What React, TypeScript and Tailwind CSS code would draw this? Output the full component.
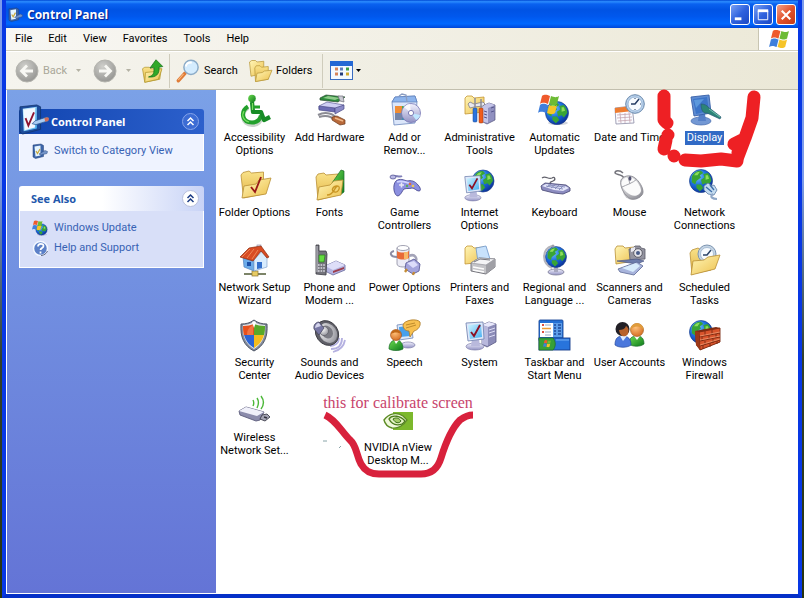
import { useState } from "react"
import type { ReactNode } from "react"


// Shared gradients, used by id from every icon

const Gradients = () => (
	<svg className="absolute h-0 w-0" aria-hidden="true">
		<defs>
			<linearGradient id="folder" x1="0" y1="0" x2="1" y2="1">
				<stop offset="0" stopColor="#fff6b8" />
				<stop offset="1" stopColor="#edc04c" />
			</linearGradient>
			<linearGradient id="folderBack" x1="0" y1="0" x2="0" y2="1">
				<stop offset="0" stopColor="#f9e28a" />
				<stop offset="1" stopColor="#e3b545" />
			</linearGradient>
			<radialGradient id="sea" cx="0.35" cy="0.3" r="0.75">
				<stop offset="0" stopColor="#7cc8ff" />
				<stop offset="0.5" stopColor="#1c6fe0" />
				<stop offset="1" stopColor="#0a2f96" />
			</radialGradient>
			<linearGradient id="screen" x1="0" y1="0" x2="1" y2="1">
				<stop offset="0" stopColor="#d2f4ff" />
				<stop offset="1" stopColor="#46aef0" />
			</linearGradient>
			<linearGradient id="lilac" x1="0" y1="0" x2="0" y2="1">
				<stop offset="0" stopColor="#f4f4ff" />
				<stop offset="1" stopColor="#9292c4" />
			</linearGradient>
			<linearGradient id="green" x1="0" y1="0" x2="1" y2="1">
				<stop offset="0" stopColor="#6edc50" />
				<stop offset="1" stopColor="#0c7a1c" />
			</linearGradient>
			<radialGradient id="grey" cx="0.35" cy="0.3" r="0.8">
				<stop offset="0" stopColor="#ffffff" />
				<stop offset="1" stopColor="#8e8e96" />
			</radialGradient>
			<radialGradient id="nav" cx="0.4" cy="0.3" r="0.8">
				<stop offset="0" stopColor="#d0d0cc" />
				<stop offset="1" stopColor="#8f8f8c" />
			</radialGradient>
			<radialGradient id="skin" cx="0.4" cy="0.3" r="0.8">
				<stop offset="0" stopColor="#ffc27a" />
				<stop offset="1" stopColor="#d0641a" />
			</radialGradient>
		</defs>
	</svg>
)


// Pieces that several icons have in common

const Folder = () => (
	<g stroke="#b98f35" strokeWidth="0.8" strokeLinejoin="round">
		<path d="M2 6l2-2.500 6-1.500 2.500 2 12-1v22l-20 4z" fill="url(#folderBack)" />
		<path d="M5 17l12-2 3-4 12-2-5 16-24 4z" fill="url(#folder)" />
	</g>
)

const SmallFolder = () => (
	<path d="M1 4l2-2h5l2 2 10-1v15l-19 2z" fill="url(#folder)" stroke="#c49632" strokeWidth="0.8" />
)

const Globe = ({ cx, cy, r }: { cx: number; cy: number; r: number }) => (
	<g transform={`translate(${cx} ${cy}) scale(${r / 10})`}>
		<circle r="10" fill="url(#sea)" stroke="#1b3f8c" strokeWidth="0.6" />
		<path d="M-8-4c2-4 5-5 8-5l2 2-3 2 1 2-4 3-1 3-3-2zM2-6l4-1c2 2 3 5 3 7l-3 4-2-2-3 1-1-4 3-2zM-4 3l4 0 2 3-3 3-3-3z" fill="#39a435" />
		<path d="M-6-5c1-2 3-3 5-3l-2 3zM4-5l2 0 1 3-3 1z" fill="#8ede5c" />
	</g>
)

const Flag = () => (
	<g>
		<path d="M4 1c3-2 5-1 8 0l-2 8c-3-1-5-2-8 0z" fill="#ef5a2c" />
		<path d="M13 1c3 1 5 2 8 0l-2 8c-3 2-5 1-8 0z" fill="#6dbb35" />
		<path d="M2 10c3-2 5-1 8 0l-2 8c-3-1-5-2-8 0z" fill="#3f7fdc" />
		<path d="M11 10c3 1 5 2 8 0l-2 8c-3 2-5 1-8 0z" fill="#f6c428" />
	</g>
)

const CheckedMonitor = () => (
	<g>
		<ellipse cx="11" cy="27.500" rx="9" ry="3.500" fill="url(#lilac)" stroke="#7d7da8" strokeWidth="0.7" />
		<path d="M8 20h7l1 7H7z" fill="#b9b9dc" />
		<path d="M2 4l17-1 1 17-16 2z" fill="#dfe8fa" stroke="#7889b4" strokeWidth="0.9" />
		<path d="M4 6l13-1 1 13-12 2z" fill="url(#screen)" />
		<path d="M7 13l3 4 6-11" fill="none" stroke="#8c1024" strokeWidth="1.900" />
	</g>
)


// Desktop icons, all on a 32 x 32 canvas

const AccessibilityIcon = () => (
	<>
		<path d="M9 14c-8 5-6 17 4 17 6 0 9-4 10-8" fill="none" stroke="#7b8f7b" strokeWidth="4" opacity="0.4" />
		<circle cx="13" cy="4.500" r="3.800" fill="url(#green)" />
		<g fill="none" stroke="#23a02c" strokeWidth="4.200" strokeLinejoin="round">
			<path d="M9 12.500c-8 5-6 16 4 16 5 0 8-3 9-7" />
			<path d="M13 8l1 10h8l3 8 6-3" stroke="#178c26" />
			<path d="M14 13h7" strokeWidth="3" />
		</g>
		<path d="M5 17c-3 5 0 10 5 11M13.500 9v7" fill="none" stroke="#7ae060" strokeWidth="1.200" />
	</>
)

const HardwareIcon = () => (
	<g strokeWidth="0.700">
		<path d="M6 4l6-3 19 2-7 5-18-2z" fill="#2b8a3a" stroke="#2c4a34" />
		<path d="M9 4l5-2 12 2-5 2z" fill="#8ecb8a" stroke="none" />
		<path d="M24 2h5l1 6-4-1z" fill="#c9c9d2" stroke="#6d6d78" />
		<path d="M5 12l8-4 17 3-9 6-16-2z" fill="#cfcff4" stroke="#5d5d96" />
		<path d="M5 12l16 2v4L5 16z" fill="#6c6cb4" stroke="#4b4b86" />
		<path d="M21 14l9-3v4l-9 5z" fill="#8b8bc8" stroke="#4b4b86" />
		<path d="M4 21c8-4 16-1 18 3M5 23c6-2 12-1 16 3" fill="none" stroke="#8c8c94" strokeWidth="2" />
		<path d="M18 23l5-1 8 4v4l-5 1-8-5z" fill="#b8693a" stroke="#6c3a1c" />
		<path d="M21 24l8 3" stroke="#f0b888" strokeWidth="1.500" />
	</g>
)

const ProgramsIcon = () => (
	<>
		<path d="M3 8l3-5 20-1 2 6-2 21-21 2z" fill="#dbe6fa" stroke="#6c88bc" strokeWidth="0.800" />
		<path d="M3 8l3-5 20-1 2 6z" fill="#8db4ec" stroke="#5b7cb8" strokeWidth="0.700" />
		<path d="M10 2l3-2 4 1 1 7" fill="none" stroke="#8a9cc0" strokeWidth="1.300" />
		<rect x="6" y="12" width="14" height="14" fill="#45b14c" />
		<path d="M6 12h7v14H6z" fill="#f08c34" />
		<path d="M6 19h14v7H6z" fill="#3f82dc" opacity="0.700" />
		<circle cx="22" cy="19" r="9.500" fill="url(#lilac)" stroke="#7676b4" strokeWidth="0.800" />
		<path d="M22 19l-7-6c2-2 4-3 6-3z" fill="#ffffff" opacity="0.800" />
		<path d="M22 19l5 7c2-1 4-3 4-5z" fill="#bfe6ff" />
		<circle cx="22" cy="19" r="2.600" fill="#ffffff" stroke="#7b7bb4" />
	</>
)

const AdminIcon = () => (
	<>
		<SmallFolder />
		<path d="M18 12l7-3 6 2v15l-8 4-6-3z" fill="#9090c0" stroke="#55557c" strokeWidth="0.700" />
		<path d="M18 12l6 2v15l-7-2zM18 12l7-3 6 2-7 3z" fill="#c4c4e8" />
		<path d="M20 17l3 1M20 20l3 1M20 23l3 1M27 14l3-1M27 18l3-1" stroke="#55558c" />
		<path d="M4 10l2-2 4 2 9-2 2 2-2 2-9 1-4 1z" fill="#e8e8ee" stroke="#70707c" strokeWidth="0.700" />
		<rect x="9" y="14" width="4" height="14" rx="1" fill="#2c74dc" stroke="#1b4690" strokeWidth="0.500" />
		<rect x="15" y="14" width="4" height="15" rx="1" fill="#f05c1c" stroke="#96300c" strokeWidth="0.500" />
		<path d="M11 4v10M17 5v9" stroke="#8c8c98" strokeWidth="1.500" />
	</>
)

const UpdatesIcon = () => (
	<>
		<ellipse cx="20" cy="29" rx="10" ry="2" fill="#8c94a8" opacity="0.400" />
		<Globe cx={19} cy={19} r={11.500} />
		<g transform="translate(0 1)"><Flag /></g>
	</>
)

const DateIcon = () => (
	<>
		<path d="M2 14l17-2 2 17-18 1z" fill="#fbfbff" stroke="#8c8ca4" strokeWidth="0.800" />
		<path d="M2 14l17-2 1 5-18 2z" fill="#ee7c30" />
		<path d="M4 21l14-1M4 24l15-1M5 27l14-1M7 19l1 10M12 19v10M16 18l1 11" stroke="#c4a4b0" strokeWidth="0.800" />
		<circle cx="22" cy="10" r="9.300" fill="#b8d0ea" stroke="#6888ac" strokeWidth="1" />
		<circle cx="22" cy="10" r="7" fill="#f6fbff" stroke="#8cacd0" strokeWidth="0.800" />
		<path d="M26 5l-4 5h-4" fill="none" stroke="#243c64" strokeWidth="1.500" />
		<path d="M22 4v1M22 15v1M28 10h-1" stroke="#243c64" />
	</>
)

const DisplayIcon = () => (
	<>
		<ellipse cx="12" cy="27" rx="10" ry="4" fill="#7398d4" stroke="#4468ac" strokeWidth="0.700" />
		<path d="M10 20h6l1 7H9z" fill="#5580c8" />
		<path d="M2 3l18-2 2 18-17 3z" fill="#5e8cd2" stroke="#3860a8" strokeWidth="0.900" />
		<path d="M4 5l14-2 2 14-13 3z" fill="#3c74c8" />
		<path d="M5 6l10-1-8 9z" fill="#5c98dc" />
		<path d="M12 10c3 0 6 1 8 4l3 2 9 7-1 2-13-6c-3 1-6-2-6-9z" fill="#2c8478" stroke="#285c74" strokeWidth="0.700" />
		<path d="M20 15l11 8" stroke="#74c4ac" />
	</>
)

const FolderOptionsIcon = () => (
	<>
		<Folder />
		<path d="M12 18l4 5 6-15" fill="none" stroke="#981818" strokeWidth="1.900" />
	</>
)

const FontsIcon = () => (
	<>
		<path d="M2 8l2-3 6-1 2 2 12-1v21l-20 5z" fill="url(#folderBack)" stroke="#b98f35" strokeWidth="0.800" />
		<path d="M18 14l9-13 3 1v21l-4 3z" fill="url(#green)" stroke="#1c6a28" strokeWidth="0.700" />
		<path d="M5 18l11-2 4-4 9-1-2 15-24 5z" fill="url(#folder)" stroke="#b98f35" strokeWidth="0.800" />
		<path d="M13 26c8 0 7-9 11-9 3 1 0 7-3 6-5-1-2-6 2-6" fill="none" stroke="#c99524" strokeWidth="1.300" />
	</>
)

const GameIcon = () => (
	<>
		<path d="M3 8c3-3 7 1 10-1" stroke="#8080b8" strokeWidth="2" fill="none" />
		<ellipse cx="4" cy="8" rx="3" ry="2" fill="#b8b8e4" stroke="#5a5a98" strokeWidth="0.800" />
		<path d="M7 12c4-3 8-1 11 0 4-1 8 0 11 4 3 3 3 6 1 6-3 0-4-3-7-3-3 1-5 0-8 1-2 2-3 6-6 7-4 0-6-11-2-15z" fill="#8c90e0" stroke="#4c4c94" strokeWidth="0.900" />
		<path d="M8 13c4-2 8 0 12 1" stroke="#d0d4ff" strokeWidth="1.800" fill="none" />
		<path d="M10 16h5M12.500 13.500v5" stroke="#e8e8f4" strokeWidth="1.600" />
		<circle cx="21" cy="15" r="1.300" fill="#e46a3c" />
		<circle cx="24" cy="17" r="1.300" fill="#f0cc50" />
		<circle cx="18" cy="17" r="1.200" fill="#5cac58" />
	</>
)

const InternetIcon = () => (
	<>
		<Globe cx={20} cy={12} r={11} />
		<g transform="translate(0 4) scale(0.9)"><CheckedMonitor /></g>
	</>
)

const KeyboardIcon = () => (
	<>
		<path d="M3 9c4-3 6 2 10 0 3-2 4 2 1 3-2 1-4 1-2 3" fill="none" stroke="#62626c" strokeWidth="1.300" />
		<path d="M2 17l4-3 21 2 4 3v3l-7 3-9-1-12-3z" fill="#8c8cc0" stroke="#50507c" strokeWidth="0.900" />
		<path d="M3 17l4-2 19 2 4 2-6 3-9-1z" fill="#e4e6fa" />
		<path d="M7 17l17 3M9 16l17 2M12 15l-4 3M16 16l-4 3M20 16l-4 4M24 17l-4 4" stroke="#8088b8" strokeWidth="0.900" />
	</>
)

const MouseIcon = () => (
	<>
		<path d="M11 9C9 5 3 6 2 4c0-3 5-3 8 0" fill="none" stroke="#74747c" strokeWidth="1.500" />
		<ellipse cx="20" cy="22" rx="10" ry="9" fill="#888890" opacity="0.500" />
		<path d="M8 11c2-4 9-6 14-2 4 3 8 9 8 14 0 4-6 8-12 7C12 28 6 17 8 11z" fill="url(#grey)" stroke="#8c8c94" strokeWidth="0.900" />
		<path d="M9 12c2-4 8-5 12-2 4 3 7 8 7 12-1 4-6 6-10 4-6-3-11-9-9-14z" fill="#fbfbfb" />
		<path d="M9 18c4-2 11-4 15-8M15 8l2 7" stroke="#9c9ca4" fill="none" strokeWidth="0.900" />
		<ellipse cx="17" cy="9.500" rx="1.400" ry="2.300" fill="#505070" />
	</>
)

const NetworkIcon = () => (
	<>
		<Globe cx={13} cy={12} r={11.500} />
		<path d="M16 17l4-3 4 3 2-1 3 5-3 5-6-1-4-4z" fill="#c4dcf0" stroke="#5c7ca4" strokeWidth="0.800" />
		<path d="M18 18l6 5M22 16l4 5" stroke="#3c6ca8" strokeWidth="1.300" />
		<path d="M25 25c-4 3 0 5 4 5" fill="none" stroke="#90a8c8" strokeWidth="2.200" />
	</>
)

const HomeIcon = () => (
	<>
		<path d="M5 30h22M16 24v6" stroke="#7c8468" strokeWidth="2" />
		<rect x="13" y="27" width="6" height="5" fill="#e8cc64" stroke="#8c7430" strokeWidth="0.700" />
		<path d="M4 12l11 4v11L5 23z" fill="#6cacea" stroke="#5484bc" strokeWidth="0.700" />
		<path d="M15 16l9-10 4 8v9l-13 4z" fill="#d8ecfe" stroke="#84a4cc" strokeWidth="0.700" />
		<rect x="18" y="1" width="4" height="6" fill="#e8e8f0" stroke="#8484a0" strokeWidth="0.600" />
		<path d="M1 13L10 4l12-2 8 11-2 1-6-7-8 10z" fill="#d84c24" stroke="#8c2c10" strokeWidth="0.700" />
		<path d="M3 13l8-8M8 14l7-9M13 15l6-9" stroke="#f08c5c" strokeWidth="0.900" />
		<path d="M18 18h5v6l-5 1z" fill="#3470cc" />
		<path d="M8 18h4v4H8z" fill="#1c50a8" />
	</>
)

const PhoneIcon = () => (
	<>
		<path d="M12 22l11-5 9 4v5l-12 5-8-4z" fill="#b4b4e0" stroke="#68689c" strokeWidth="0.800" />
		<path d="M12 22l11-5 9 4-12 5z" fill="#dedef8" />
		<path d="M20 27l11-4v2l-11 4z" fill="#9c3c4c" />
		<path d="M3 1h3v6h7l1 3-1 21-10-1z" fill="#74747c" stroke="#3a3a42" strokeWidth="0.800" />
		<path d="M6 11h6l-1 7H6z" fill="#64dc40" stroke="#287c1c" strokeWidth="0.700" />
		<path d="M5 21h7M5 24h7M5 27h7" stroke="#dcdce4" strokeWidth="1.400" strokeDasharray="1.600 1" />
		<path d="M4 2v26" stroke="#c4c4cc" />
	</>
)

const PowerIcon = () => (
	<>
		<path d="M8 13C1 13 0 8 5 7" fill="none" stroke="#8c8ca4" strokeWidth="2" />
		<path d="M8 4v16c0 4 12 4 12 0V4z" fill="#ececf6" stroke="#8c8ca0" strokeWidth="0.800" />
		<path d="M8 7v7c3 2 9 2 12 0V7c-3 2-9 2-12 0z" fill="#e86a38" />
		<path d="M15 8h4v7h-4z" fill="#f8b868" />
		<ellipse cx="14" cy="4" rx="6" ry="2.500" fill="#ffffff" stroke="#8c8ca0" strokeWidth="0.800" />
		<path d="M20 12c6-3 9 3 6 6" fill="none" stroke="#a4a4b8" strokeWidth="2.500" />
		<path d="M17 19l8-4 6 5-1 7-6 3-8-5z" fill="#a4a4dc" stroke="#5c5c98" strokeWidth="0.900" />
		<path d="M18 19l7-2 4 4-5 3z" fill="#dcdcfa" />
		<path d="M18 25l-2 3M25 28l-1 3" stroke="#c48c34" strokeWidth="2.300" />
	</>
)

const PrinterIcon = () => (
	<>
		<SmallFolder />
		<path d="M12 4l10-2 4 13-12 3z" fill="#c8e2fc" stroke="#6c94c8" strokeWidth="0.800" />
		<path d="M7 19l8-5 16 1v8l-9 7-15-3z" fill="#c4c4c8" stroke="#6c6c74" strokeWidth="0.900" />
		<path d="M7 19l8-5 16 1-9 6z" fill="#f4f4f6" stroke="#8c8c94" strokeWidth="0.600" />
		<path d="M10 18l6-3 10 1" fill="none" stroke="#74747c" />
		<path d="M9 23l11 2M9 26l11 2" stroke="#fdfdfd" strokeWidth="1.500" />
		<path d="M22 21l9-6v8l-9 7z" fill="#a0a0a6" />
	</>
)

const RegionalIcon = () => (
	<>
		<ellipse cx="17" cy="28" rx="8" ry="3" fill="url(#lilac)" stroke="#7c7c98" strokeWidth="0.800" />
		<path d="M15 23h4v5h-4z" fill="#a8a8c0" />
		<path d="M13 2C3 5 2 19 13 24" fill="none" stroke="#b4b4bc" strokeWidth="2" />
		<Globe cx={17} cy={13} r={10.500} />
		<circle cx="14" cy="2" r="1.500" fill="#9c9ca8" />
	</>
)

const ScannerIcon = () => (
	<>
		<path d="M1 5l2-3h6l2 2 9-1v14l-18 3z" fill="url(#folder)" stroke="#b98f35" strokeWidth="0.800" />
		<path d="M15 5l4-1 2-2h5l1 2 4 1v10l-15 1z" fill="#9494a0" stroke="#5c5c68" strokeWidth="0.800" />
		<path d="M17 4l4-1v4l-4 1z" fill="#e8e8f0" />
		<circle cx="24" cy="9" r="4.300" fill="#e4e4ea" stroke="#54545c" strokeWidth="0.900" />
		<circle cx="24" cy="9" r="2" fill="#485c88" />
		<path d="M3 17l20-2 7 2-7 3z" fill="#6c7cac" stroke="#4c5884" strokeWidth="0.700" />
		<path d="M4 25l19-7 6 4-9 9-14-3z" fill="#a8b4dc" stroke="#5c6894" strokeWidth="0.800" />
		<path d="M8 24l14-5 4 3-7 6z" fill="#d8ecfc" />
	</>
)

const TasksIcon = () => (
	<>
		<path d="M2 9l2-3 6-2 3 2 10-2v22l-19 4z" fill="url(#folderBack)" stroke="#b98f35" strokeWidth="0.800" />
		<circle cx="19" cy="10" r="9" fill="#c4d4e4" stroke="#7c94b0" />
		<circle cx="19" cy="10" r="6.500" fill="#f8fcff" stroke="#94acc8" strokeWidth="0.700" />
		<path d="M23 6l-4 5h-4" fill="none" stroke="#2c4468" strokeWidth="1.500" />
		<path d="M5 17l11-1 4-3 12-2-5 14-24 6z" fill="url(#folder)" stroke="#b98f35" strokeWidth="0.800" />
	</>
)

const SecurityIcon = () => (
	<>
		<path d="M15 1c4 3 8 4 13 4 1 13-3 22-13 27C5 27 1 18 2 5c5 0 9-1 13-4z" fill="#848c9c" stroke="#444c5c" strokeWidth="0.900" />
		<path d="M15 3c4 2 7 3 11 3 1 11-3 19-11 24C7 25 3 17 4 6c4 0 7-1 11-3z" fill="#e8ecf0" />
		<path d="M15 5v11H5c-1-3-1-6-1-9 4 0 8-1 11-2z" fill="#e8501c" />
		<path d="M15 5c3 1 7 2 11 2 0 3 0 6-1 9H15z" fill="#58a828" />
		<path d="M5 16h10v13c-5-3-8-7-10-13z" fill="#2c64d4" />
		<path d="M15 16h10c-2 6-5 10-10 13z" fill="#f4bc1c" />
		<path d="M14 6v10H8c0-5 2-8 6-10z" fill="#f88c5c" opacity="0.600" />
		<path d="M13 3l2 6 2-6-2-1z" fill="#ffffff" />
	</>
)

const SoundIcon = () => (
	<>
		<path d="M18 30c7 0 11-4 11-11M17 27c5 0 9-3 9-8M20 33c8-2 11-6 12-12" fill="none" stroke="#b4b0e0" strokeWidth="1.800" />
		<ellipse cx="14" cy="14" rx="11" ry="13" transform="rotate(-35 14 14)" fill="#606068" stroke="#3c3c44" strokeWidth="0.900" />
		<ellipse cx="15" cy="14" rx="8.500" ry="10.500" transform="rotate(-35 15 14)" fill="url(#grey)" />
		<ellipse cx="14" cy="13" rx="5.500" ry="7" transform="rotate(-35 14 13)" fill="#7c7c84" />
		<circle cx="11" cy="12" r="4.500" fill="url(#grey)" stroke="#54545c" strokeWidth="0.600" />
		<path d="M1 10c-1-4 2-7 5-7l5 6-5 7z" fill="#7878a4" stroke="#44445c" strokeWidth="0.700" />
		<path d="M2 9c0-3 2-5 4-5l2 3z" fill="#d4d4ec" />
	</>
)

const SpeechIcon = () => (
	<>
		<ellipse cx="20" cy="26" rx="7" ry="3" fill="url(#lilac)" stroke="#7c7ca8" strokeWidth="0.700" />
		<path d="M9 6l14-2 2 15-14 2z" fill="#dce8fa" stroke="#7088b8" strokeWidth="0.800" />
		<path d="M11 8l10-1 1 10-10 1z" fill="#46a0ec" />
		<path d="M15 6c1-5 14-7 17-3 1 4-2 8-6 9l-4 6-1-6c-4 0-6-3-6-6z" fill="#f8c050" stroke="#a87828" strokeWidth="0.800" />
		<path d="M18 6l9-2M18 9l10-3" stroke="#b88428" strokeWidth="0.900" />
		<path d="M1 30c0-6 3-9 7-9s7 3 7 9c-4 2-10 2-14 0z" fill="url(#green)" stroke="#186a28" strokeWidth="0.700" />
		<path d="M6 21l2 4 3-4z" fill="#ffffff" />
		<circle cx="8" cy="16" r="5.500" fill="url(#skin)" stroke="#984c14" strokeWidth="0.600" />
		<path d="M3 15c0-5 9-6 10 0-3-2-7-2-10 0z" fill="#c06818" />
	</>
)

const SystemIcon = () => (
	<>
		<path d="M18 6l7-3 7 2v18l-9 5-5-3z" fill="#8c8cb8" stroke="#585884" strokeWidth="0.800" />
		<path d="M18 6l7-3 7 2-8 3z" fill="#e8e8fa" />
		<path d="M18 6l6 2v19l-6-2z" fill="#b8b8dc" />
		<path d="M25 11l6-2M25 14l6-2M25 18l6-2" stroke="#dcdcf4" />
		<CheckedMonitor />
	</>
)

const TaskbarIcon = () => (
	<>
		<rect x="1" y="1" width="24" height="21" rx="1" fill="#2470d4" stroke="#1c4898" strokeWidth="0.900" />
		<rect x="2" y="4" width="13" height="14" fill="#ffffff" />
		<rect x="15" y="4" width="9" height="14" fill="#5c9ce8" />
		<path d="M4 6h2M4 13h2" stroke="#e05040" strokeWidth="1.800" />
		<path d="M7 6h6M7 13h6M7 16h6" stroke="#9cacc4" />
		<path d="M4 9.500h9" stroke="#f09c34" strokeWidth="1.500" />
		<path d="M16 6h2M16 9h2M16 12h2M16 15h2M20 6h3M20 9h3M20 12h3M20 15h3" stroke="#1c4898" strokeWidth="1.600" />
		<rect x="1" y="19" width="31" height="12" fill="#2874dc" stroke="#143c8c" strokeWidth="0.900" />
		<path d="M1 19h14c3 3 3 9 0 12H1z" fill="#36a038" stroke="#1c6c24" strokeWidth="0.700" />
		<g transform="translate(5 21) scale(0.38)"><Flag /></g>
		<path d="M18 21h13" stroke="#74b0f4" />
	</>
)

const UsersIcon = () => (
	<>
		<path d="M15 25c0-6 3-8 8-8 5 0 7 3 7 8-4 3-11 3-15 0z" fill="url(#green)" stroke="#186a28" strokeWidth="0.700" />
		<path d="M20 17l3 4 3-4z" fill="#ffffff" />
		<circle cx="23" cy="11" r="6.500" fill="url(#skin)" stroke="#985414" strokeWidth="0.600" />
		<path d="M16.500 11c0-9 13-9 13 0-3-4-9-5-13 0z" fill="#e09c3c" />
		<path d="M1 26c0-7 3-9 8-9s8 3 8 9c-4 3-12 3-16 0z" fill="#4c78dc" stroke="#24489c" strokeWidth="0.700" />
		<path d="M6 17l3 5 4-5z" fill="#e0ecff" />
		<circle cx="8.500" cy="10" r="7" fill="#222026" />
		<path d="M5 11c3 0 6-1 7-4 3 2 3 5 2 8-3 4-8 3-9-4z" fill="#b8622c" />
	</>
)

const FirewallIcon = () => (
	<>
		<Globe cx={12} cy={13} r={11.500} />
		<path d="M6 12l21-4 4 1v14l-20 8-4-5z" fill="#7c2c14" />
		<path d="M10 13l21-4v14l-20 8z" fill="#d8542c" stroke="#7c2810" strokeWidth="0.900" />
		<path d="M6 12l4 1 1 18-4-5z" fill="#9c3818" />
		<path d="M10 18l21-4M11 22l20-4M11 27l20-6M16 12v5M23 11v5M13 18v4M20 16v4M27 15v4M16 22v4M24 20v4M14 26v4M21 24v4M28 22v3" stroke="#7c2810" strokeWidth="0.900" />
		<path d="M11 17l20-4M11 21l20-4M11 26l20-6" stroke="#f8b48c" strokeWidth="0.600" />
	</>
)

const WirelessIcon = () => (
	<>
		<path d="M15 6c1 2 1 4 0 6M19 4c2 3 2 6 0 10M23 2c3 4 3 9 0 13" fill="none" stroke="#4cb838" strokeWidth="1.400" />
		<path d="M1 17l7-4 18 5-4 8-4 1L2 21z" fill="#8c8cac" stroke="#5c5c7c" strokeWidth="0.900" />
		<path d="M1 17l7-4 18 5-7 4z" fill="#f0f0fa" />
		<path d="M24 21l5-1 3 3-5 4-5-2z" fill="#a4a4b4" stroke="#40404c" strokeWidth="0.900" />
		<path d="M26 23l3 1" stroke="#30303c" strokeWidth="1.600" />
	</>
)

const PanelIcon = () => (
	<>
		<path d="M1 3l18-2 4 2v24l-19 5-3-2z" fill="#1c4c9c" stroke="#12346c" strokeWidth="0.800" />
		<path d="M4 5l15-2v23L5 29z" fill="url(#screen)" />
		<path d="M5 6l12-2v21L6 28z" fill="#f2f8ff" />
		<path d="M7 15l3 8 6-14" fill="none" stroke="#8c1430" strokeWidth="2" />
		<path d="M14 21l3-3 12-4 3 1-1 3-13 4z" fill="#a8ccf4" stroke="#2c5890" strokeWidth="0.800" />
		<path d="M27 15l4-1 1 2-1 2-3 1z" fill="#d06c5c" />
	</>
)

// Lighter version of the same panel, for the 16px sizes

const SmallPanelIcon = () => (
	<>
		<path d="M2 4l16-2 5 3v22l-16 4-5-3z" fill="#3c64a8" stroke="#1c3c74" />
		<path d="M5 7l12-2v20L7 27z" fill="#e4f4ff" />
		<path d="M8 16l3 5 5-9" fill="none" stroke="#c8a83c" strokeWidth="2.500" />
		<path d="M14 22l12-7 5 2-1 4-12 3z" fill="#7494c8" stroke="#2c4c84" />
	</>
)


const Svg = ({ children, className = "h-8 w-8" }: { children: ReactNode; className?: string }) => (
	<svg viewBox="0 0 32 32" className={`${className} shrink-0 overflow-visible`} aria-hidden="true">
		{children}
	</svg>
)

const items = [
	{ label: "Accessibility\nOptions", icon: AccessibilityIcon },
	{ label: "Add Hardware", icon: HardwareIcon },
	{ label: "Add or\nRemov...", icon: ProgramsIcon },
	{ label: "Administrative\nTools", icon: AdminIcon },
	{ label: "Automatic\nUpdates", icon: UpdatesIcon },
	{ label: "Date and Time", icon: DateIcon },
	{ label: "Display", icon: DisplayIcon },
	{ label: "Folder Options", icon: FolderOptionsIcon },
	{ label: "Fonts", icon: FontsIcon },
	{ label: "Game\nControllers", icon: GameIcon },
	{ label: "Internet\nOptions", icon: InternetIcon },
	{ label: "Keyboard", icon: KeyboardIcon },
	{ label: "Mouse", icon: MouseIcon },
	{ label: "Network\nConnections", icon: NetworkIcon },
	{ label: "Network Setup\nWizard", icon: HomeIcon },
	{ label: "Phone and\nModem ...", icon: PhoneIcon },
	{ label: "Power Options", icon: PowerIcon },
	{ label: "Printers and\nFaxes", icon: PrinterIcon },
	{ label: "Regional and\nLanguage ...", icon: RegionalIcon },
	{ label: "Scanners and\nCameras", icon: ScannerIcon },
	{ label: "Scheduled\nTasks", icon: TasksIcon },
	{ label: "Security\nCenter", icon: SecurityIcon },
	{ label: "Sounds and\nAudio Devices", icon: SoundIcon },
	{ label: "Speech", icon: SpeechIcon },
	{ label: "System", icon: SystemIcon },
	{ label: "Taskbar and\nStart Menu", icon: TaskbarIcon },
	{ label: "User Accounts", icon: UsersIcon },
	{ label: "Windows\nFirewall", icon: FirewallIcon },
	{ label: "Wireless\nNetwork Set...", icon: WirelessIcon },
]

const menu = ["File", "Edit", "View", "Favorites", "Tools", "Help"]


const TitleBar = () => (
	<header className="flex h-7 items-center justify-between bg-[linear-gradient(#0048d4_0%,#2b8cff_6%,#0a62f0_14%,#0053e4_35%,#0058ee_60%,#0068ff_85%,#0046d8_100%)] px-0.5 pt-px">
		<div className="flex items-center gap-1">
			<Svg className="h-[15px] w-[15px]"><SmallPanelIcon /></Svg>
			<h1 className="font-['Open_Sans','Noto_Sans',sans-serif] text-[12px] font-bold text-white [text-shadow:1px_1px_1px_#0a1883]">Control Panel</h1>
		</div>
		<div className="flex gap-[3px]">
			<button aria-label="Minimize" className="h-[21px] w-5 rounded-[3px] border border-white bg-linear-to-br from-[#7ba0f4] via-[#2f62de] to-[#1c48c4]">
				<svg viewBox="0 0 19 19"><path d="M4 13.500h7" stroke="#fff" strokeWidth="3" /></svg>
			</button>
			<button aria-label="Maximize" className="h-[21px] w-5 rounded-[3px] border border-white bg-linear-to-br from-[#7ba0f4] via-[#2f62de] to-[#1c48c4]">
				<svg viewBox="0 0 19 19" fill="none" stroke="#fff"><path d="M4.500 5v9.500h10V5" /><path d="M4 5h11" strokeWidth="3" /></svg>
			</button>
			<button aria-label="Close" className="h-[21px] w-5 rounded-[3px] border border-white bg-linear-to-br from-[#f0a088] via-[#e2532c] to-[#c43a14]">
				<svg viewBox="0 0 19 19"><path d="M5 5l9 9M14 5l-9 9" stroke="#fff" strokeWidth="2.200" /></svg>
			</button>
		</div>
	</header>
)

const MenuBar = () => (
	<div className="flex h-[23px] items-stretch justify-between border-b border-[#d0cebf] bg-linear-to-r from-[#f8f7f3] to-[#ece9d8]">
		<nav className="flex items-center gap-4 pl-[9px]">
			{menu.map((item) => (
				<button key={item}>{item}</button>
			))}
		</nav>
		<div className="flex w-10 items-center justify-center border-l border-[#c8c5b2] bg-white">
			<svg viewBox="0 0 21 19" className="h-[18px] w-5" aria-hidden="true"><Flag /></svg>
		</div>
	</div>
)

const Caret = ({ color }: { color: string }) => (
	<svg viewBox="0 0 5 3" className="h-[3px] w-[5px] shrink-0"><path d="M0 0h5L2.500 3z" fill={color} /></svg>
)

const NavArrow = ({ d }: { d: string }) => (
	<svg viewBox="0 0 24 24" className="h-6 w-6 shrink-0">
		<circle cx="12" cy="12" r="11" fill="url(#nav)" stroke="#b4b4ae" />
		<path d={d} fill="none" stroke="#f8f8f4" strokeWidth="2.800" />
	</svg>
)

const Toolbar = () => (
	<div className="flex h-[39px] items-center border-t border-b border-t-white border-b-[#c2bfae] bg-linear-to-r from-[#f5f4ee] to-[#ebe8d7] pl-[9px]">
		<button disabled className="flex w-[66px] items-center gap-1 text-[#a9a799]">
			<NavArrow d="M18 12H7M12 6.500L6.500 12l5.500 5.500" />
			<span className="grow text-left">Back</span>
			<Caret color="#b4b2a4" />
		</button>
		<button disabled aria-label="Forward" className="ml-3 flex w-[38px] items-center justify-between">
			<NavArrow d="M6 12h11M12 6.500l5.500 5.500-5.500 5.500" />
			<Caret color="#b4b2a4" />
		</button>
		<button aria-label="Up" className="ml-2.5">
			<Svg className="h-6 w-6">
				<path d="M2 13l3-2 6 0 2 2 14 0-2 14-20 4z" fill="url(#folderBack)" stroke="#b39a30" />
				<path d="M6 18l10-1 4-3 8-1-5 14-18 4z" fill="url(#folder)" stroke="#b39a30" />
				<path d="M10 24c7-2 8-6 7-13l-5 1L20 1l9 9-5 1c1 9-4 14-14 13z" fill="#30a828" stroke="#16701a" />
			</Svg>
		</button>
		<span className="ml-1 h-[34px] w-px bg-[#cfccbc]" />
		<button className="ml-1.5 flex w-[62px] items-center gap-1">
			<Svg className="h-6 w-6">
				<path d="M3 29l9-10" stroke="#e07c38" strokeWidth="4.500" strokeLinecap="round" />
				<path d="M3 28l7-8" stroke="#f8bc84" strokeWidth="1.500" />
				<circle cx="20" cy="11" r="9.500" fill="#d4ecfe" stroke="#8cacc8" strokeWidth="2" />
				<path d="M13 10c1-4 4-6 8-5" fill="none" stroke="#fff" strokeWidth="2.500" />
			</Svg>
			Search
		</button>
		<button className="ml-2.5 flex w-[64px] items-center gap-1">
			<Svg className="h-6 w-6">
				<path d="M2 4l3-2h5l2 2 9-1v16L4 23z" fill="url(#folder)" stroke="#b99a3c" />
				<path d="M9 12l2-3h5l2 2 9-1v17l-17 3z" fill="url(#folderBack)" stroke="#b99a3c" />
				<path d="M12 19l7-1 3-2 10-1-5 12-17 3z" fill="url(#folder)" stroke="#b99a3c" />
			</Svg>
			Folders
		</button>
		<span className="ml-2.5 h-[34px] w-px bg-[#cfccbc]" />
		<button aria-label="Views" className="ml-[7px] flex items-center gap-[3px]">
			<svg viewBox="0 0 23 19" className="h-[19px] w-[23px]">
				<rect x="0.500" y="0.500" width="22" height="18" fill="#f4f9ff" stroke="#3a6cc0" />
				<path d="M0 2.500h23" stroke="#2468d4" strokeWidth="5" />
				<path d="M5 8h3M5 13h3" stroke="#d88458" strokeWidth="3" />
				<path d="M10 8h3" stroke="#5c7cc0" strokeWidth="3" />
				<path d="M10 13h3" stroke="#243c7c" strokeWidth="3" />
				<path d="M16 8h3" stroke="#3c9c44" strokeWidth="3" />
				<path d="M16 13h3" stroke="#d0a82c" strokeWidth="3" />
			</svg>
			<Caret color="#000" />
		</button>
	</div>
)

const Chevrons = ({ dark }: { dark?: boolean }) => (
	<svg viewBox="0 0 19 19" className="h-[19px] w-[19px]">
		<circle cx="9.500" cy="9.500" r="8" fill={dark ? "#3c6cd4" : "#ffffff"} stroke={dark ? "#86a4ea" : "#b8c0dc"} />
		<path d="M6.500 9l3-3 3 3M6.500 13l3-3 3 3" fill="none" stroke={dark ? "#ffffff" : "#1c3c84"} strokeWidth="1.500" />
	</svg>
)

const Sidebar = () => {

	const [tasksOpen, setTasksOpen] = useState(true);
	const [seeAlsoOpen, setSeeAlsoOpen] = useState(true);

	return (
		<aside className="w-[210px] shrink-0 border-l border-white bg-linear-to-b from-[#7ba1e7] to-[#6474d6] px-3 pt-[19px] text-[#3762b4]">
			<section>
				<div className="flex h-[25px] items-center justify-between rounded-t-[3px] bg-linear-to-r from-[#1145b0] to-[#2c60cc] pr-1">
					<div className="flex items-end gap-0.5">
						<Svg className="-mt-1.5 h-[30px] w-[30px]"><PanelIcon /></Svg>
						<h2 className="pb-1 font-['Open_Sans','Noto_Sans',sans-serif] font-bold text-white">Control Panel</h2>
					</div>
					<button aria-label="Toggle Control Panel" onClick={() => setTasksOpen(!tasksOpen)}><Chevrons dark /></button>
				</div>
				{tasksOpen && (
					<div className="border border-t-0 border-white bg-[#eff3ff] px-3 pt-[9px] pb-[11px]">
						<a href="#category" className="flex items-center gap-1.5">
							<Svg className="h-4 w-4"><SmallPanelIcon /></Svg>
							Switch to Category View
						</a>
					</div>
				)}
			</section>
			<section className="mt-[15px]">
				<div className="flex h-[25px] items-center justify-between rounded-t-[3px] bg-linear-to-r from-white from-45% to-[#c8d3f6] pr-1 pl-3">
					<h2 className="font-['Open_Sans','Noto_Sans',sans-serif] font-bold text-[#2257ac]">See Also</h2>
					<button aria-label="Toggle See Also" onClick={() => setSeeAlsoOpen(!seeAlsoOpen)}><Chevrons /></button>
				</div>
				{seeAlsoOpen && (
					<div className="flex flex-col gap-1 border border-t-0 border-white bg-[#d8dff8] px-3 pt-[9px] pb-[11px]">
						<a href="#update" className="flex items-center gap-1.5">
							<Svg className="h-4 w-4"><UpdatesIcon /></Svg>
							Windows Update
						</a>
						<a href="#help" className="flex items-center gap-1.5">
							<Svg className="h-4 w-4">
								<circle cx="17" cy="17" r="14" fill="#5c80c8" stroke="#f4f8ff" strokeWidth="3" />
								<path d="M12 13c0-7 11-7 11-1 0 4-6 4-6 8M17 23v4" fill="none" stroke="#ffffff" strokeWidth="3.500" />
								<path d="M31 22c-2 5-7 9-13 9" fill="none" stroke="#5c6484" strokeWidth="2" />
							</Svg>
							Help and Support
						</a>
					</div>
				)}
			</section>
		</aside>
	)
}

// Hand-drawn note lying over the icon area

const Markup = () => (
	<>
		<svg viewBox="0 0 110 80" className="pointer-events-none absolute top-0 left-[440px] h-20 w-[110px] overflow-visible" fill="none" stroke="#ee2024" strokeWidth="13" strokeLinecap="round" strokeLinejoin="round">
			<path d="M8 6v24l3 3M12 45v0M8 59l2-9M18 66v0" />
			<path d="M29 70l16 1 20-2 16 2" />
			<path d="M98 7l-2 21-7 20-8 21M78 54l8-4-4 12" />
		</svg>
		<figure className="absolute top-[303px] left-[107px] flex w-[150px] flex-col items-center">
			<figcaption className="font-['Liberation_Serif',serif] text-[16px] leading-5 whitespace-nowrap text-[#c8446c]">this for calibrate screen</figcaption>
			<svg viewBox="0 0 150 86" className="pointer-events-none absolute top-2.5 left-0 w-full overflow-visible" fill="none">
				<path d="M2 12c11 5 16 16 25 25 7 6 6 15 11 24 4 7 9 10 18 10h42c11 0 17-6 20-16 4-13 10-29 19-38 4-3 8-5 13-5" stroke="#d8213c" strokeWidth="7" />
				<path d="M0 38h4M18 43l-2 2" stroke="#88a4a8" />
			</svg>
			<button className="relative flex flex-col items-center">
				<svg viewBox="0 0 30 20" className="-mt-0.5 h-5 w-[30px]" aria-hidden="true">
					<path d="M10 1h20v18H10z" fill="#7cb82c" />
					<path d="M1 9C6 2 14 1 20 5l4 4c-3 5-9 9-15 8C5 16 2 13 1 9z" fill="#f0f8dc" stroke="#5c8c24" strokeWidth="1.400" />
					<path d="M6 8c3-5 12-3 16 2-3 5-12 6-16-2z" fill="#e4f4c4" stroke="#4c7c1c" strokeWidth="1.400" />
					<path d="M10 8c3-2 6-1 8 2-2 3-6 2-8-2z" fill="#a4cc68" stroke="#3c6c18" />
				</svg>
				<span className="mt-2.5 leading-[13px] whitespace-pre">{"NVIDIA nView\nDesktop M..."}</span>
			</button>
		</figure>
	</>
)

const App = () => {

	const [selected, setSelected] = useState("Display");

	return (
		<div className="flex min-h-screen bg-linear-to-b from-[#7d9cec] from-30% via-[#33402a] via-60% to-[#28340c] px-0.5 font-['Roboto','Open_Sans',sans-serif] text-[11px] leading-4 text-black">
			<Gradients />
			<div className="flex grow flex-col border-x-4 border-b-4 border-x-[#0838e4] border-b-[#0530c8]">
				<TitleBar />
				<MenuBar />
				<Toolbar />
				<div className="flex grow border-b border-white bg-white">
					<Sidebar />
					<main className="relative grow">
						<ul className="grid grid-cols-[repeat(auto-fill,75px)] auto-rows-[75px] pt-1 pl-px">
							{items.map((item) => (
								<li key={item.label} className="flex justify-center">
									<button onClick={() => setSelected(item.label)} className="flex flex-col items-center gap-[5px]">
										<Svg><item.icon /></Svg>
										<span className={`px-0.5 pb-px leading-[13px] whitespace-pre ${selected === item.label ? "bg-[#316ac5] text-white" : ""}`}>{item.label}</span>
									</button>
								</li>
							))}
						</ul>
						<Markup />
					</main>
				</div>
			</div>
		</div>
	)
}

export default App
